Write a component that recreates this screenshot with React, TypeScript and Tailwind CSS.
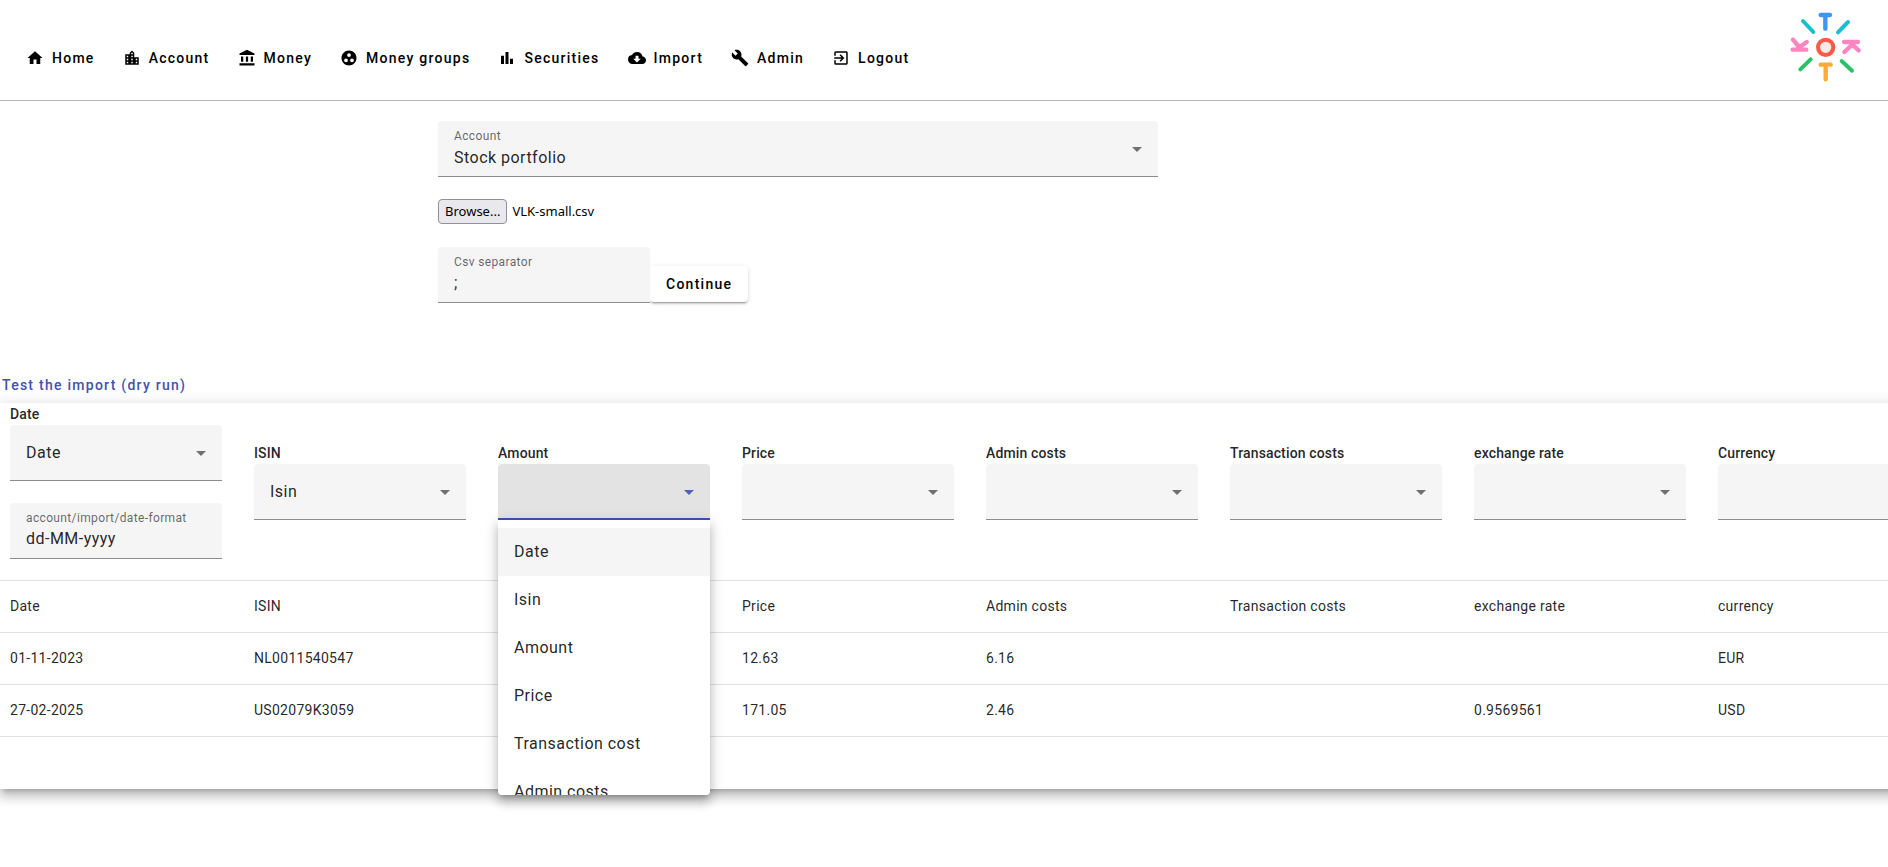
import { useRef, useState } from 'react'
import type { IconType } from 'react-icons'
import {
  MdAccountBalance,
  MdBarChart,
  MdBuild,
  MdCloudDownload,
  MdExitToApp,
  MdGroupWork,
  MdHome,
  MdLocationCity,
} from 'react-icons/md'

const navItems: { label: string; icon: IconType }[] = [
  { label: 'Home', icon: MdHome },
  { label: 'Account', icon: MdLocationCity },
  { label: 'Money', icon: MdAccountBalance },
  { label: 'Money groups', icon: MdGroupWork },
  { label: 'Securities', icon: MdBarChart },
  { label: 'Import', icon: MdCloudDownload },
  { label: 'Admin', icon: MdBuild },
  { label: 'Logout', icon: MdExitToApp },
]

const columns = ['Date', 'ISIN', 'Amount', 'Price', 'Admin costs', 'Transaction costs', 'exchange rate', 'Currency']

const fieldOptions = [
  'Date',
  'Isin',
  'Amount',
  'Price',
  'Transaction cost',
  'Admin costs',
]

const rows = [
  ['Date', 'ISIN', '', 'Price', 'Admin costs', 'Transaction costs', 'exchange rate', 'currency'],
  ['01-11-2023', 'NL0011540547', '', '12.63', '6.16', '', '', 'EUR'],
  ['27-02-2025', 'US02079K3059', '', '171.05', '2.46', '', '0.9569561', 'USD'],
  ['', '', '', '', '', '', '', ''],
]

function Logo() {
  return (
    <svg viewBox="60 36 216 210" className="h-[70px] w-[72px]" fill="none" strokeWidth="12" strokeLinecap="round" strokeLinejoin="round" role="img" aria-label="Logo">
      <path d="M152 45H180M166 45V86" stroke="#3d94fb" strokeWidth="13" />
      <path d="M99 63L130 96M234 66L204 97" stroke="#17bfcf" />
      <path d="M68 149H109M69 119L90 144M110 126L82 146" stroke="#fd86c0" strokeWidth="13" />
      <path d="M222 126H264M266 151L243 130M223 156L250 131" stroke="#fd86c0" strokeWidth="13" />
      <path d="M91 208L122 178M215 183L246 212" stroke="#2bc267" />
      <path d="M152 194H182M167 194V238" stroke="#fdab31" strokeWidth="13" />
      <circle cx="167" cy="142" r="23" fill="#fbebe4" stroke="#fb5a4b" />
    </svg>
  )
}

type FieldProps = {
  id: string
  label?: string
  ariaLabel?: string
  value: string
  onChange: (value: string) => void
}

function SelectField({ id, label, ariaLabel, value, onChange, options, active }: FieldProps & { options: string[]; active?: boolean }) {
  return (
    <div className="relative">
      {label && (
        <label htmlFor={id} className="absolute top-[7px] left-4 text-xs tracking-[0.03em] text-black/60">
          {label}
        </label>
      )}
      <select
        id={id}
        aria-label={ariaLabel}
        value={value}
        onChange={(e) => onChange(e.target.value)}
        className={`block h-14 w-full appearance-none rounded-t px-4 text-base font-normal tracking-[0.03em] text-black/87 outline-none ${
          active ? 'border-b-2 border-[#3f51b5] bg-[#e3e3e3]' : 'border-b border-[#8c8c8c] bg-[#f5f5f5]'
        } ${label ? 'pt-[18px]' : ''}`}
      >
        <option value=""></option>
        {options.map((option) => (
          <option key={option}>{option}</option>
        ))}
      </select>
      <svg
        viewBox="0 0 10 5"
        className={`pointer-events-none absolute top-[26px] right-4 h-[5px] w-[10px] ${active ? 'fill-[#5060bf]' : 'fill-[#707070]'}`}
      >
        <path d="M0 0h10L5 5z" />
      </svg>
    </div>
  )
}

function TextField({ id, label, value, onChange }: FieldProps) {
  return (
    <div className="relative w-[212px]">
      <label htmlFor={id} className="absolute top-[7px] left-4 text-xs font-normal tracking-[0.03em] text-black/60">
        {label}
      </label>
      <input
        id={id}
        type="text"
        value={value}
        onChange={(e) => onChange(e.target.value)}
        className="block h-14 w-full rounded-t border-b border-[#8c8c8c] bg-[#f5f5f5] px-4 pt-4 text-base font-normal tracking-[0.03em] text-black/87 outline-none"
      />
    </div>
  )
}

export default function App() {
  const [account, setAccount] = useState('Stock portfolio')
  const [fileName, setFileName] = useState('VLK-small.csv')
  const [separator, setSeparator] = useState(';')
  const [dateFormat, setDateFormat] = useState('dd-MM-yyyy')
  const [mapping, setMapping] = useState(['Date', 'Isin', '', '', '', '', '', ''])
  const [openColumn, setOpenColumn] = useState<number | null>(2)
  const fileInput = useRef<HTMLInputElement>(null)

  const setColumn = (index: number, value: string) => {
    setMapping(mapping.map((current, i) => (i === index ? value : current)))
    setOpenColumn(null)
  }

  return (
    <div className="min-h-screen overflow-x-hidden bg-white font-[Roboto,sans-serif] text-black/87">
      <header className="flex items-start justify-between border-b border-[#b5b5b5] pr-[26px] pb-[18px] pl-[14px]">
        <nav className="flex gap-2 pt-10">
          {navItems.map(({ label, icon: Icon }) => (
            <a key={label} href="#" className="flex h-9 items-center gap-2 pr-3 pl-2 first:pl-3 text-sm font-medium tracking-[0.09em] text-black">
              <Icon className="size-[18px]" />
              {label}
            </a>
          ))}
        </nav>
        <a href="#" className="mt-3">
          <Logo />
        </a>
      </header>

      <form className="ml-[438px] max-w-[720px] pt-5" onSubmit={(e) => e.preventDefault()}>
        <SelectField id="account" label="Account" value={account} onChange={setAccount} options={['Stock portfolio']} />

        <div className="mt-[22px] flex items-center gap-[5px] font-['Noto_Sans',sans-serif] text-[13px] text-black">
          <button
            type="button"
            onClick={() => fileInput.current?.click()}
            className="h-[25px] rounded border border-[#8f8f9d] bg-[#e9e9ed] px-1.5"
          >
            Browse...
          </button>
          <span>{fileName}</span>
          <input
            ref={fileInput}
            type="file"
            accept=".csv"
            aria-label="Csv file"
            className="hidden"
            onChange={(e) => setFileName(e.target.files?.[0]?.name ?? '')}
          />
        </div>

        <div className="mt-[23px] flex items-end">
          <TextField id="separator" label="Csv separator" value={separator} onChange={setSeparator} />
          <button
            type="submit"
            className="mb-px h-9 rounded bg-white px-4 text-sm font-medium tracking-[0.09em] text-black shadow-[0_3px_1px_-2px_rgba(0,0,0,0.2),0_2px_2px_0_rgba(0,0,0,0.14),0_1px_5px_0_rgba(0,0,0,0.12)]"
          >
            Continue
          </button>
        </div>
      </form>

      <button type="button" className="mt-16 ml-0.5 block h-9 text-sm font-medium tracking-[0.09em] text-[#3f51b5]">
        Test the import (dry run)
      </button>

      <div className="w-max min-w-full bg-white shadow-[0_5px_5px_-3px_rgba(0,0,0,0.2),0_8px_10px_1px_rgba(0,0,0,0.14),0_3px_14px_2px_rgba(0,0,0,0.12)]">
        <table className="table-fixed border-separate border-spacing-0 text-left text-sm">
          <thead>
            <tr>
              {columns.map((column, i) => (
                <th key={column} scope="col" className="w-[244px] min-w-[244px] border-b border-[#e0e0e0] pr-[22px] pl-[10px] align-middle font-medium tracking-[0.01em]">
                  <div className="w-[212px] pb-[21px]">
                    <div className="leading-[22px]">{column}</div>
                    <div className="relative">
                      <SelectField
                        id={`column-${i}`}
                        ariaLabel={column}
                        value={mapping[i]}
                        onChange={(value) => setColumn(i, value)}
                        options={fieldOptions}
                        active={openColumn === i}
                      />
                      {openColumn === i && (
                        <ul
                          role="listbox"
                          aria-label={column}
                          className="absolute top-full left-0 z-10 max-h-[275px] w-full overflow-y-auto rounded-b bg-white py-2 text-base font-normal tracking-[0.03em] shadow-[0_5px_5px_-3px_rgba(0,0,0,0.2),0_8px_10px_1px_rgba(0,0,0,0.14),0_3px_14px_2px_rgba(0,0,0,0.12)] [scrollbar-width:none]"
                        >
                          {fieldOptions.map((option, n) => (
                            <li
                              key={option}
                              role="option"
                              aria-selected={mapping[i] === option}
                              onClick={() => setColumn(i, option)}
                              className={`flex h-12 cursor-pointer items-center px-4 hover:bg-[#f5f5f5] ${n === 0 ? 'bg-[#f5f5f5]' : ''}`}
                            >
                              {option}
                            </li>
                          ))}
                        </ul>
                      )}
                    </div>
                    {i === 0 && (
                      <div className="mt-[22px]">
                        <TextField id="date-format" label="account/import/date-format" value={dateFormat} onChange={setDateFormat} />
                      </div>
                    )}
                  </div>
                </th>
              ))}
            </tr>
          </thead>
          <tbody>
            {rows.map((row, r) => (
              <tr key={r} className="group">
                {row.map((cell, c) => (
                  <td key={c} className="h-[52px] border-b border-[#e0e0e0] pb-0.5 pl-[10px] tracking-[0.02em] group-last:border-b-0">
                    {cell}
                  </td>
                ))}
              </tr>
            ))}
          </tbody>
        </table>
      </div>
    </div>
  )
}
